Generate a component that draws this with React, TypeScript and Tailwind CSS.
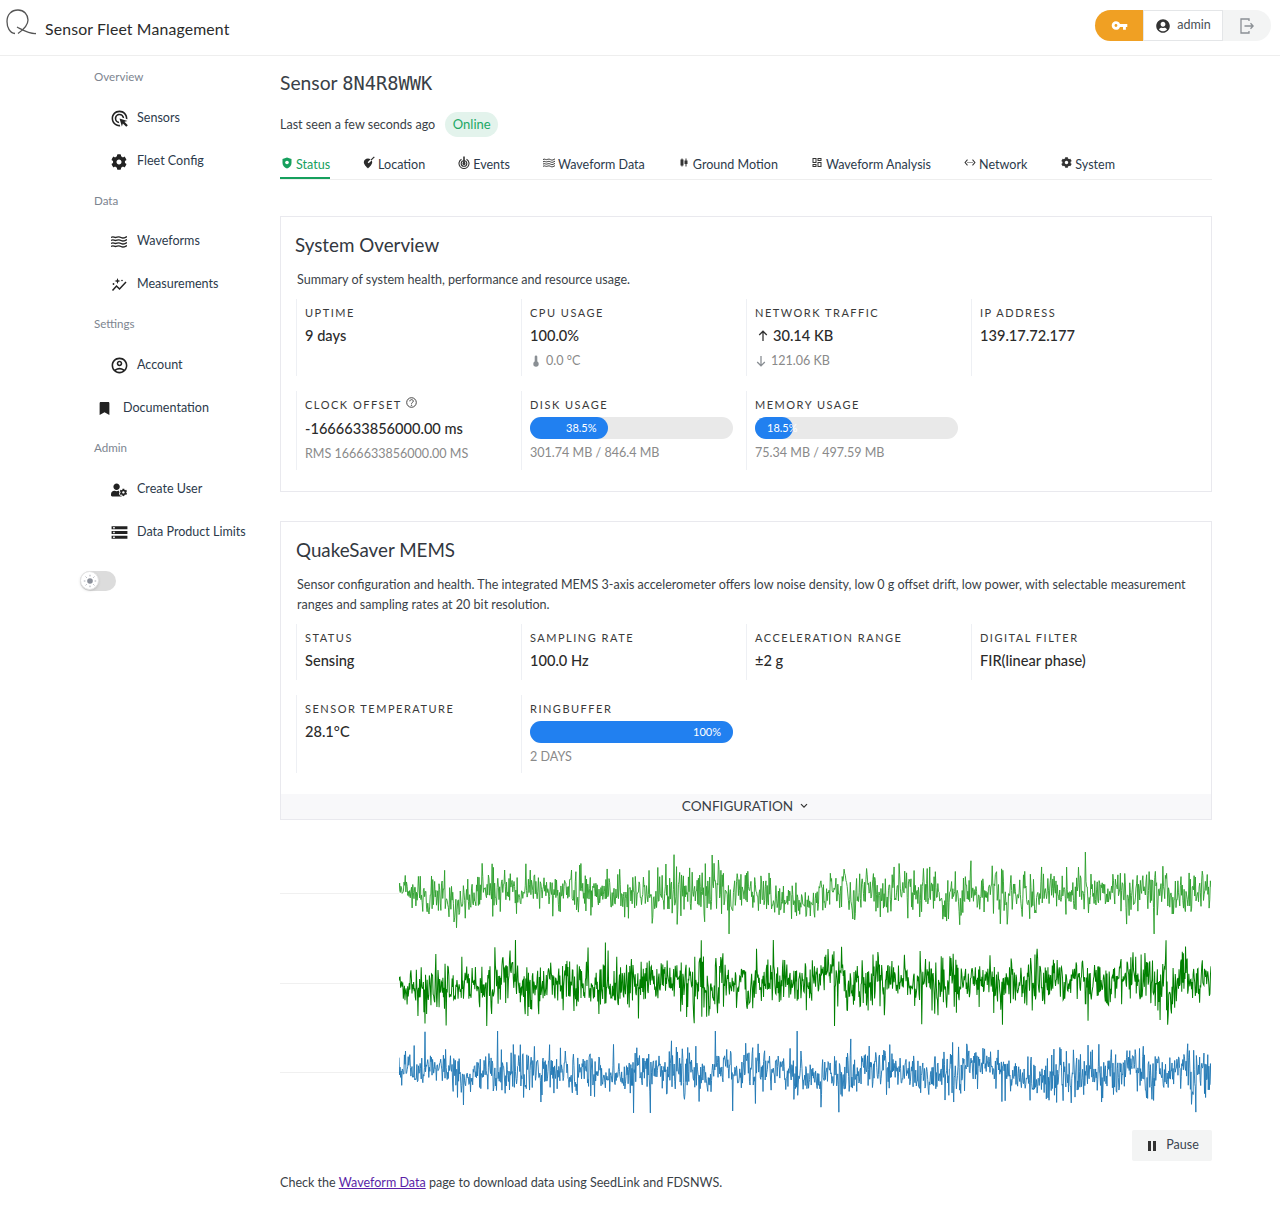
import React, { useMemo } from "react";
import { FaCog, FaBookmark, FaUserCircle, FaUserCog } from "react-icons/fa";
import { MdAdsClick, MdOutlineAccountCircle, MdStorage, MdSettingsEthernet, MdOutlineDashboard, MdCandlestickChart, MdVpnKey } from "react-icons/md";

function WavesIcon({ size = 16 }: { size?: number }) {
  return (
    <svg width={size} height={size} viewBox="0 0 16 16" fill="none" stroke="currentColor" strokeWidth="1.300">
      <path d="M0 3.500c2-1.500 3 0 4.500 0S7.500 2 10 3.500s4 0 6-1" />
      <path d="M0 6.500c2-1.500 3 0 4.500 0S7.500 5 10 6.500s4 0 6-1" />
      <path d="M0 9.500c2-1.500 3 0 4.500 0S7.500 8 10 9.500s4 0 6-1" />
      <path d="M0 12.500c2-1.500 3 0 4.500 0S7.500 11 10 12.500s4 0 6-1" />
    </svg>
  );
}

function MeasureIcon() {
  return (
    <svg width="16" height="16" viewBox="0 0 16 16" fill="currentColor">
      <path d="M1.500 13.500 5.500 9l3 3L15 5" fill="none" stroke="currentColor" strokeWidth="1.500" />
      <path d="M6.500 1 7.300 3.200 9.500 4 7.300 4.800 6.500 7 5.700 4.800 3.500 4 5.700 3.200Z" />
      <circle cx="2.500" cy="7" r="0.900" />
      <circle cx="11" cy="3.500" r="0.800" />
    </svg>
  );
}

function Logo() {
  return (
    <svg width="31" height="27" viewBox="0 0 31 27" fill="none" stroke="#555" strokeWidth="1.300">
      <path d="M9 24.500C3.500 24 1 18 1 12.500 1 5.500 5.500 1 12 1c6 0 10 4.500 10 10 0 6-5 10-10 13.500" />
      <path d="M11 18c6 3 12 7 19 6.500" />
    </svg>
  );
}

function LogoutIcon() {
  return (
    <svg width="14" height="16" viewBox="0 0 14 16" fill="none" stroke="#8a8f94" strokeWidth="1.300">
      <path d="M9 3V1H1v14h8v-2" />
      <path d="M4.500 8H13M10.500 5.200 13.200 8l-2.700 2.800" />
    </svg>
  );
}

function SunIcon() {
  return (
    <svg width="14" height="14" viewBox="0 0 14 14" fill="#8a8f99" stroke="#a0a4ab" strokeWidth="0.900">
      <circle cx="7" cy="7" r="2.800" stroke="none" />
      <path d="M7 .8v1.600M7 11.600v1.600M.8 7h1.600M11.600 7h1.600M2.600 2.600l1.100 1.100M10.300 10.300l1.100 1.100M2.600 11.400l1.100-1.100M10.300 3.700l1.100-1.100" />
    </svg>
  );
}

function ShieldIcon() {
  return (
    <svg width="12" height="12" viewBox="0 0 12 12">
      <path d="M6 .5 10.500 2v4c0 3-2.200 4.800-4.500 5.500C3.700 10.800 1.500 9 1.500 6V2Z" fill="#16a05d" />
      <circle cx="6" cy="5.500" r="1.800" fill="#fff" />
    </svg>
  );
}

function LocationIcon() {
  return (
    <svg width="12" height="13" viewBox="0 0 12 13" fill="#2b2b2b">
      <path d="M5 2.500C2.500 2.500 .8 4.300.8 6.300c0 2.700 4.200 6.200 4.200 6.200s4.200-3.500 4.200-6.200c0-.7-.2-1.300-.5-1.900L5.600 7.200 4.700 6.300 7.500 3.200C6.800 2.800 5.900 2.500 5 2.500Z" />
      <path d="M8 4.200 11.300.8" stroke="#2b2b2b" strokeWidth="1.200" />
    </svg>
  );
}

function EventsIcon() {
  return (
    <svg width="12" height="13" viewBox="0 0 12 13" fill="none" stroke="#333" strokeWidth="1.100">
      <path d="M3.500 3.200A5 5 0 1 0 8.500 3.200" />
      <circle cx="6" cy="7.500" r="2.800" />
      <circle cx="6" cy="7.500" r="1" fill="#333" />
      <path d="M6 .5v6.500" strokeWidth="1.600" />
    </svg>
  );
}

function ThermoIcon() {
  return (
    <svg width="8" height="12" viewBox="0 0 8 12" fill="#8a8f94">
      <rect x="2.700" y="0.500" width="2.600" height="7" rx="1.300" />
      <circle cx="4" cy="9" r="2.700" />
    </svg>
  );
}

function Arrow({ up, color }: { up?: boolean; color: string }) {
  return (
    <svg width="12" height="12" viewBox="0 0 12 12" fill="none" stroke={color} strokeWidth="1.300">
      {up ? <path d="M6 11V1.500M2.200 5 6 1.200 9.800 5" /> : <path d="M6 1v9.500M2.200 7 6 10.800 9.800 7" />}
    </svg>
  );
}

function HelpIcon() {
  return (
    <svg width="11" height="11" viewBox="0 0 11 11" fill="none" stroke="#333" strokeWidth="0.900">
      <circle cx="5.500" cy="5.500" r="4.800" />
      <path d="M3.800 4.300c0-2.200 3.500-2.200 3.500-.1 0 1.300-1.800 1.200-1.800 2.500" />
      <circle cx="5.500" cy="8.200" r="0.300" />
    </svg>
  );
}

function ChevronDown() {
  return (
    <svg width="8" height="6" viewBox="0 0 8 6" fill="none" stroke="#333" strokeWidth="1.200">
      <path d="M1 1.200 4 4.200 7 1.200" />
    </svg>
  );
}

function PauseIcon() {
  return (
    <svg width="8" height="10" viewBox="0 0 8 10" fill="#333">
      <rect x="0" y="0" width="3" height="10" />
      <rect x="5" y="0" width="3" height="10" />
    </svg>
  );
}

function NavHeading({ children, first }: { children: React.ReactNode; first?: boolean }) {
  return <div className={`h-[20px] pl-[94px] text-[11.6px] leading-[20px] text-[#7d8590] ${first ? "" : "mt-[9px]"}`}>{children}</div>;
}

function NavItem({ icon, label, doc }: { icon: React.ReactNode; label: string; doc?: boolean }) {
  return (
    <div className={`flex h-[43px] items-center pt-[2px] text-[12.55px] text-[#2c3a4b] ${doc ? "pl-[98px]" : "pl-[111px]"}`}>
      <span className="flex w-[26px] shrink-0 items-center text-[#222]">{icon}</span>
      <span className={doc ? "-ml-[1px]" : ""}>{label}</span>
    </div>
  );
}

function Tab({ icon, label, active }: { icon: React.ReactNode; label: string; active?: boolean }) {
  return (
    <div
      className={`flex h-[30px] items-center gap-[3px] border-b-2 pt-[5px] ${
        active ? "border-[#16a05d] text-[#16a05d]" : "border-transparent text-[#2c3a4b]"
      }`}
    >
      <span className={`-mt-[6px] flex items-center justify-center ${active ? "w-[13px]" : "w-[12px] text-[#333]"}`}>{icon}</span>
      <span className="text-[12.55px]">{label}</span>
    </div>
  );
}

function Label({ children }: { children: React.ReactNode }) {
  return <div className="h-[16px] text-[11px] leading-[16px] tracking-[1.5px] text-[#3a3a3a] uppercase">{children}</div>;
}

function Value({ children }: { children: React.ReactNode }) {
  return <div className="mt-[4px] flex h-[22px] items-center gap-[4px] text-[14.6px] font-medium leading-[22px] text-[#2b2b2b]">{children}</div>;
}

function Sub({ children }: { children: React.ReactNode }) {
  return <div className="mt-[4px] flex h-[20px] items-center gap-[4px] text-[12.55px] leading-[20px] text-[#8a8a8a]">{children}</div>;
}

function Stat({ children, h }: { children: React.ReactNode; h: string }) {
  return <div className={`${h} border-l border-[#eef0f4] pl-[8px] pt-[6px]`}>{children}</div>;
}

function Bar({ pct, text, pad }: { pct: string; text: string; pad: string }) {
  return (
    <div className="mb-[4px] mt-[4px] h-[22px] w-[203px] rounded-full bg-[#e9e9e9]">
      <div className={`flex h-full rounded-full bg-[#2180f0] text-[11px] leading-[22px] text-white whitespace-nowrap ${pad}`} style={{ width: pct }}>
        {text}
      </div>
    </div>
  );
}

function useWave(seed: number, sd: number, spikeP: number, n: number) {
  return useMemo(() => {
    let s = seed;
    const rnd = () => {
      s = (s * 1664525 + 1013904223) % 4294967296;
      return s / 4294967296;
    };
    const pts: string[] = [];
    let slow = 0;
    let env = 1;
    for (let i = 0; i < n; i++) {
      slow = slow * 0.9 + (rnd() - 0.5) * 1.2;
      if (i % 40 === 0) env = 0.7 + rnd() * 0.6;
      const g = (rnd() + rnd() + rnd() + rnd() - 2) * 1.73;
      const spike = rnd() < spikeP ? (rnd() < 0.5 ? -1 : 1) * (2 + rnd() * 1.8) : 0;
      const y = 40 + (slow * 0.5 + g * env + spike) * sd;
      const x = (i / (n - 1)) * 812;
      pts.push(`${x.toFixed(2)},${Math.max(1, Math.min(79, y)).toFixed(1)}`);
    }
    return pts.join(" ");
  }, [seed, sd, spikeP, n]);
}

function Wave({ color, seed, sd, h, mt, n, w }: { color: string; seed: number; sd: number; h: number; mt: string; n: number; w: number }) {
  const points = useWave(seed, sd, 0.014, n);
  return (
    <div className={`flex ${mt}`} style={{ height: h }}>
      <div className="w-[119px] self-center border-t border-[#f0f0f0]" />
      <svg width="812" height={h} viewBox="0 0 812 80" preserveAspectRatio="none" className="block">
        <polyline points={points} fill="none" stroke={color} strokeWidth={w} />
      </svg>
    </div>
  );
}

export default function App() {
  return (
    <div className="min-h-[1206px] bg-white text-[12.55px] text-[#2c3a4b]" style={{ fontFamily: "Lato, 'Noto Sans', sans-serif" }}>
      <header className="flex h-[56px] items-center justify-between border-b border-[#eeeeee] pl-[6px] pr-[9px]">
        <div className="flex items-center">
          <div className="-mt-[11px] h-[27px] w-[39px]"><Logo /></div>
          <div className="mt-[2px] text-[15.8px] tracking-[0.01em] text-[#2b2b2b]">Sensor Fleet Management</div>
        </div>
        <div className="-mt-[4px] flex h-[31px] items-stretch text-[12.55px]">
          <div className="flex w-[48px] items-center justify-center rounded-l-full bg-[#f0a023] text-white"><MdVpnKey size={17} /></div>
          <div className="flex w-[80px] items-center justify-center gap-[7px] border border-[#e4e6e8] bg-white pl-[1px] text-[#4a4f55]"><FaUserCircle size={14} className="text-[#333]" />admin</div>
          <div className="flex w-[48px] items-center justify-center rounded-r-full bg-[#f3f4f4]"><LogoutIcon /></div>
        </div>
      </header>

      <div className="flex">
        <nav className="w-[280px] shrink-0 pt-[11px]">
          <NavHeading first>Overview</NavHeading>
          <div className="mt-[9px]">
            <NavItem icon={<MdAdsClick size={19} className="-ml-[1px]" />} label="Sensors" />
            <NavItem icon={<FaCog size={16} />} label="Fleet Config" />
          </div>
          <NavHeading>Data</NavHeading>
          <div className="mt-[8px]">
            <NavItem icon={<WavesIcon />} label="Waveforms" />
            <NavItem icon={<MeasureIcon />} label="Measurements" />
          </div>
          <NavHeading>Settings</NavHeading>
          <div className="mt-[9px]">
            <NavItem icon={<MdOutlineAccountCircle size={19} className="-ml-[1px]" />} label="Account" />
            <NavItem doc icon={<FaBookmark size={13} />} label="Documentation" />
          </div>
          <NavHeading>Admin</NavHeading>
          <div className="mt-[9px]">
            <NavItem icon={<FaUserCog size={16} />} label="Create User" />
            <NavItem icon={<MdStorage size={19} className="-ml-[1px]" />} label="Data Product Limits" />
          </div>
          <div className="ml-[80px] mt-[18px] h-[20px] w-[36px] rounded-full bg-[#dcdcdc]">
            <div className="flex h-[19px] w-[19px] items-center justify-center rounded-full border border-[#e4e4e4] bg-white shadow-sm">
              <SunIcon />
            </div>
          </div>
        </nav>

        <main className="w-[932px] pt-[14px]">
          <h1 className="h-[26px] text-[19.3px] leading-[26px] text-[#3a3f47]">
            Sensor <span style={{ fontFamily: "'DejaVu Sans Mono', monospace" }} className="text-[18.7px]">8N4R8WWK</span>
          </h1>
          <div className="mt-[16px] flex h-[25px] items-center gap-[10px] text-[12.55px] text-[#3a3f47]">
            <span className="mt-[1px]">Last seen a few seconds ago</span>
            <span className="flex h-[25px] w-[53px] items-center justify-center rounded-full bg-[#e3f3ec] text-[13px] text-[#21a865]">Online</span>
          </div>
          <div className="mt-[12px] flex gap-[33px] border-b border-[#eeeeee]">
            <Tab active icon={<ShieldIcon />} label="Status" />
            <Tab icon={<LocationIcon />} label="Location" />
            <Tab icon={<EventsIcon />} label="Events" />
            <Tab icon={<WavesIcon size={12} />} label="Waveform Data" />
            <Tab icon={<MdCandlestickChart size={15} />} label="Ground Motion" />
            <Tab icon={<MdOutlineDashboard size={13} />} label="Waveform Analysis" />
            <Tab icon={<MdSettingsEthernet size={13} />} label="Network" />
            <Tab icon={<FaCog size={11} />} label="System" />
          </div>

          <section className="mt-[36px] h-[276px] border border-[#e9e9ee] px-[15px] pt-[14px]">
            <h2 className="h-[28px] -ml-[1px] text-[18.8px] leading-[28px] text-[#33383f]">System Overview</h2>
            <p className="mt-[11px] pl-[1px] text-[12.55px] leading-[20px] text-[#3a3f47]">Summary of system health, performance and resource usage.</p>
            <div className="mt-[9px] grid w-[900px] grid-cols-[225px_225px_225px_225px] gap-y-[15px]">
              <Stat h="h-[77px]"><Label>Uptime</Label><Value>9 days</Value></Stat>
              <Stat h="h-[77px]"><Label>CPU Usage</Label><Value>100.0%</Value><Sub><span className="flex w-[12px] justify-center"><ThermoIcon /></span>0.0 °C</Sub></Stat>
              <Stat h="h-[77px]"><Label>Network Traffic</Label><Value><span className="ml-[2px] flex"><Arrow up color="#333" /></span>30.14 KB</Value><Sub><Arrow color="#8a8f94" />121.06 KB</Sub></Stat>
              <Stat h="h-[77px]"><Label>IP Address</Label><Value>139.17.72.177</Value></Stat>
              <Stat h="h-[79px]">
                <div className="flex items-start gap-[4px]"><Label>Clock Offset</Label><span className="flex"><HelpIcon /></span></div>
                <div className="pt-[1px]"><Value>-1666633856000.00 ms</Value></div>
                <Sub>RMS 1666633856000.00 MS</Sub>
              </Stat>
              <Stat h="h-[79px]"><Label>Disk Usage</Label><Bar pct="38.5%" text="38.5%" pad="pl-[36px]" /><Sub>301.74 MB / 846.4 MB</Sub></Stat>
              <Stat h="h-[79px]"><Label>Memory Usage</Label><Bar pct="18.5%" text="18.5%" pad="pl-[12px]" /><Sub>75.34 MB / 497.59 MB</Sub></Stat>
            </div>
          </section>

          <section className="mt-[29px] h-[299px] border border-[#e9e9ee] pt-[14px]">
            <h2 className="h-[28px] px-[15px] text-[18.8px] leading-[28px] text-[#33383f]">QuakeSaver MEMS</h2>
            <p className="mt-[11px] pl-[16px] pr-[15px] text-[12.55px] leading-[20px] text-[#3a3f47]">
              Sensor configuration and health. The integrated MEMS 3-axis accelerometer offers low noise density, low 0 g offset drift, low power, with selectable measurement ranges and sampling rates at 20 bit resolution.
            </p>
            <div className="mt-[9px] ml-[15px] grid w-[900px] grid-cols-[225px_225px_225px_225px] gap-y-[15px]">
              <Stat h="h-[56px]"><Label>Status</Label><Value>Sensing</Value></Stat>
              <Stat h="h-[56px]"><Label>Sampling Rate</Label><Value>100.0 Hz</Value></Stat>
              <Stat h="h-[56px]"><Label>Acceleration Range</Label><Value>±2 g</Value></Stat>
              <Stat h="h-[56px]"><Label>Digital Filter</Label><Value>FIR(linear phase)</Value></Stat>
              <Stat h="h-[78px]"><Label>Sensor Temperature</Label><Value>28.1°C</Value></Stat>
              <Stat h="h-[78px]"><Label>Ringbuffer</Label><Bar pct="100%" text="100%" pad="justify-end pr-[12px]" /><Sub>2 DAYS</Sub></Stat>
            </div>
            <div className="mt-[21px] flex h-[25px] items-center justify-center gap-[7px] bg-[#f8f8fa] pb-[1px] pr-[2px] text-[13.6px] text-[#3a3f47]">
              CONFIGURATION <ChevronDown />
            </div>
          </section>

          <div className="mt-[31px]">
            <Wave color="#2ca02c" seed={11} sd={10} h={84} mt="mt-0" n={1300} w={0.9} />
            <Wave color="#008000" seed={77} sd={10.5} h={88} mt="mt-[4px]" n={1500} w={1} />
            <Wave color="#1f77b4" seed={123} sd={9.500} h={84} mt="mt-[3px]" n={1500} w={0.9} />
          </div>

          <div className="mt-[16px] flex justify-end">
            <div className="flex h-[31px] w-[80px] items-center justify-center gap-[10px] rounded-[2px] bg-[#f3f4f4] pl-[3px] text-[12.55px] text-[#3a4450]">
              <PauseIcon />Pause
            </div>
          </div>
          <p className="mt-[12px] text-[12.55px] leading-[20px] text-[#3a3f47]">
            Check the <a className="text-[#5b1fa8] underline">Waveform Data</a> page to download data using SeedLink and FDSNWS.
          </p>
        </main>
      </div>
    </div>
  );
}
